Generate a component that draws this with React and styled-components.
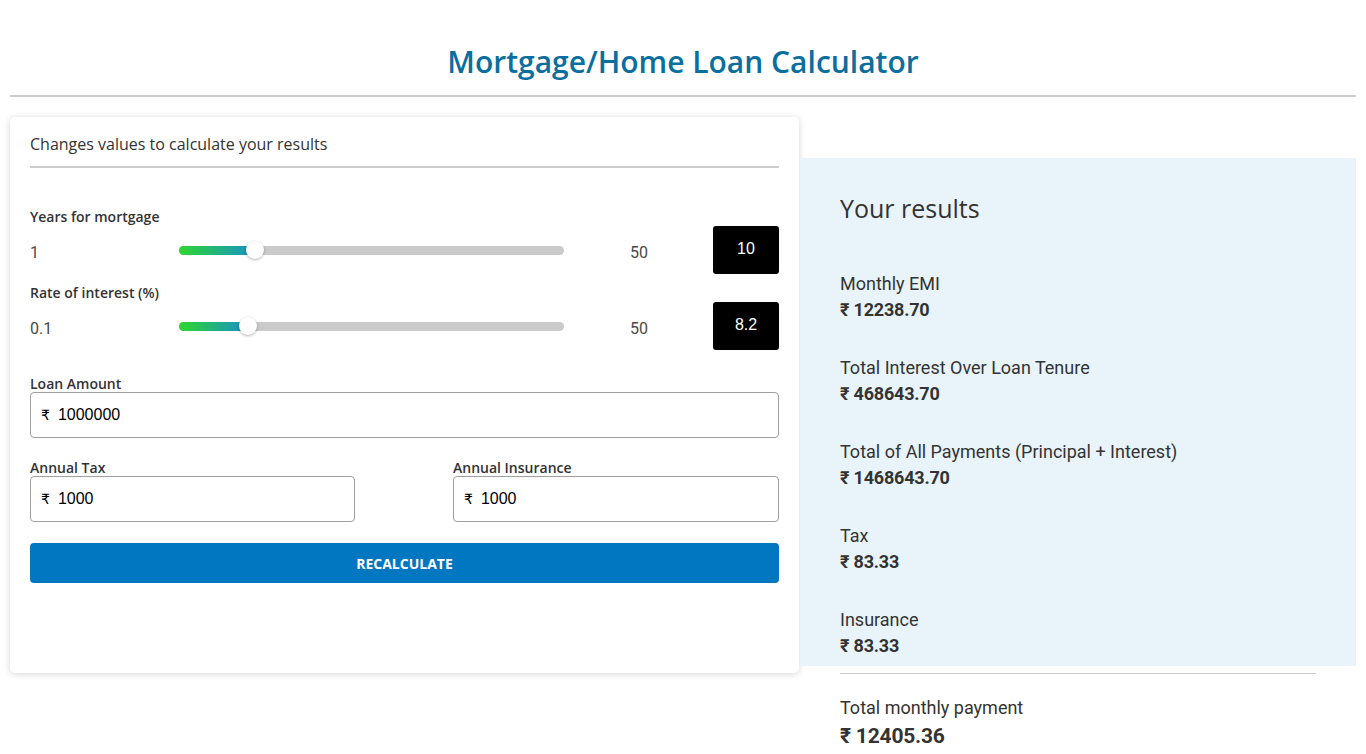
import React from 'react';
import styled, { createGlobalStyle } from 'styled-components';

const GlobalStyle = createGlobalStyle`
  body {
    margin: 0;
    background: #ffffff;
    font-family: 'Open Sans', sans-serif;
    color: #333;
  }
`;

const Page = styled.div`
  padding: 42px 10px 0;
`;

const Title = styled.h1`
  margin: 0;
  text-align: center;
  font-family: 'Open Sans', sans-serif;
  font-weight: 600;
  font-size: 30px;
  line-height: 40px;
  color: #0a6e9f;
`;

const Rule = styled.hr`
  margin: 13px 0 0;
  border: none;
  border-top: 2px solid #cccccc;
`;

const Main = styled.div`
  display: grid;
  grid-template-columns: 789px 1fr;
  column-gap: 1px;
  margin-top: 20px;
  align-items: start;
`;

const Card = styled.div`
  background: #fff;
  border-radius: 5px;
  box-shadow: 0 1px 7px rgba(0, 0, 0, 0.16);
  padding: 16px 20px 90px;
`;

const CardHeader = styled.p`
  margin: 0;
  font-size: 16px;
  line-height: 22px;
  color: #333;
  padding-bottom: 11px;
  border-bottom: 2px solid #cccccc;
`;

const Sliders = styled.div`
  margin-top: 41px;
`;

const SliderBlock = styled.div`
  margin-bottom: 11px;
`;

const FieldLabel = styled.div`
  font-size: 14px;
  font-weight: 600;
  line-height: 16px;
  color: #333;
  margin-bottom: ${(p) => p.$gap || 0}px;
`;

const SliderRow = styled.div`
  display: grid;
  grid-template-columns: 149px 385px 1fr 66px;
  align-items: center;
  height: 48px;
`;

const Bound = styled.span`
  font-family: Roboto, sans-serif;
  font-size: 16px;
  color: #4a4a4a;
  padding-top: 4px;
  padding-left: ${(p) => p.$pad || 0}px;
`;

const Track = styled.div`
  position: relative;
  height: 9px;
  border-radius: 5px;
  background: #cacaca;
`;

const Fill = styled.div`
  height: 100%;
  border-radius: 5px;
  background: linear-gradient(90deg, #2ed62e 0%, #1891c9 100%);
`;

const Thumb = styled.div`
  position: absolute;
  top: 50%;
  width: 18px;
  height: 18px;
  margin-left: -9px;
  margin-top: -9px;
  border-radius: 50%;
  background: #fff;
  box-shadow: 0 1px 3px rgba(0, 0, 0, 0.3);
`;

const ValueBox = styled.div`
  height: 48px;
  background: #000;
  border-radius: 3px;
  color: #fff;
  font-family: 'Liberation Sans', Arial, sans-serif;
  font-size: 16px;
  display: flex;
  align-items: center;
  justify-content: center;
  padding-bottom: 3px;
  box-sizing: border-box;
`;

const Field = styled.div`
  margin-top: ${(p) => p.$top || 0}px;
`;

const InputBox = styled.div`
  display: flex;
  align-items: center;
  height: 46px;
  box-sizing: border-box;
  border: 1px solid #a0a0a0;
  border-radius: 4px;
  padding: 0 10px;
  font-family: 'Liberation Sans', Arial, sans-serif;
  font-size: 16px;
  color: #000;
`;

const Rupee = styled.span`
  font-family: 'DejaVu Sans', sans-serif;
  font-size: 14px;
  margin-right: 8px;
`;

const TwoCols = styled.div`
  display: grid;
  grid-template-columns: 325px 326px;
  column-gap: 98px;
  margin-top: 22px;
`;

const Button = styled.button`
  display: block;
  width: 100%;
  height: 40px;
  margin-top: 21px;
  border: none;
  border-radius: 4px;
  background: #0277c1;
  color: #fff;
  font-family: 'Open Sans', sans-serif;
  font-weight: 700;
  font-size: 14px;
  cursor: pointer;
`;

const ResultsColumn = styled.div`
  margin-top: 41px;
`;

const ResultsPanel = styled.div`
  background: #e8f4fa;
  padding: 34px 40px 8px;
`;

const ResultsTitle = styled.h2`
  margin: 0 0 48px;
  font-family: 'Open Sans', sans-serif;
  font-weight: 400;
  font-size: 25px;
  line-height: 32px;
  color: #333;
`;

const ResultItem = styled.div`
  margin-bottom: ${(p) => (p.$last ? 0 : 34)}px;
`;

const ResultLabel = styled.div`
  font-family: Roboto, sans-serif;
  font-size: 18px;
  line-height: 24px;
  color: #333;
`;

const ResultValue = styled.div`
  margin-top: 2px;
  font-family: Roboto, 'Noto Sans', sans-serif;
  font-weight: 700;
  font-size: ${(p) => (p.$big ? 21 : 18)}px;
  line-height: ${(p) => (p.$big ? 28 : 24)}px;
  letter-spacing: -0.2px;
  color: #333;
`;

const TotalSection = styled.div`
  margin: 7px 40px 0;
  border-top: 1px solid #cccccc;
  padding-top: 22px;
`;

function Slider({ label, min, max, value }) {
  const pct = (value - min) / (max - min);
  const pos = 9 + pct * 367;
  return (
    <SliderBlock>
      <FieldLabel $gap={1}>{label}</FieldLabel>
      <SliderRow>
        <Bound>{min}</Bound>
        <Track>
          <Fill style={{ width: pos }} />
          <Thumb style={{ left: pos }} />
        </Track>
        <Bound $pad={66}>{max}</Bound>
        <ValueBox>{value}</ValueBox>
      </SliderRow>
    </SliderBlock>
  );
}

function MoneyInput({ value }) {
  return (
    <InputBox>
      <Rupee>₹</Rupee>
      {value}
    </InputBox>
  );
}

const results = [
  { label: 'Monthly EMI', value: '12238.70' },
  { label: 'Total Interest Over Loan Tenure', value: '468643.70' },
  { label: 'Total of All Payments (Principal + Interest)', value: '1468643.70' },
  { label: 'Tax', value: '83.33' },
  { label: 'Insurance', value: '83.33' },
];

export default function App() {
  return (
    <>
      <GlobalStyle />
      <Page>
        <Title>Mortgage/Home Loan Calculator</Title>
        <Rule />
        <Main>
          <Card>
            <CardHeader>Changes values to calculate your results</CardHeader>
            <Sliders>
              <Slider label="Years for mortgage" min={1} max={50} value={10} />
              <Slider label="Rate of interest (%)" min={0.1} max={50} value={8.2} />
            </Sliders>
            <Field $top={26}>
              <FieldLabel>Loan Amount</FieldLabel>
              <MoneyInput value="1000000" />
            </Field>
            <TwoCols>
              <Field>
                <FieldLabel>Annual Tax</FieldLabel>
                <MoneyInput value="1000" />
              </Field>
              <Field>
                <FieldLabel>Annual Insurance</FieldLabel>
                <MoneyInput value="1000" />
              </Field>
            </TwoCols>
            <Button>RECALCULATE</Button>
          </Card>
          <ResultsColumn>
            <ResultsPanel>
              <ResultsTitle>Your results</ResultsTitle>
              {results.map((r, i) => (
                <ResultItem key={r.label} $last={i === results.length - 1}>
                  <ResultLabel>{r.label}</ResultLabel>
                  <ResultValue>₹ {r.value}</ResultValue>
                </ResultItem>
              ))}
            </ResultsPanel>
            <TotalSection>
              <ResultLabel>Total monthly payment</ResultLabel>
              <ResultValue $big>₹ 12405.36</ResultValue>
            </TotalSection>
          </ResultsColumn>
        </Main>
      </Page>
    </>
  );
}
